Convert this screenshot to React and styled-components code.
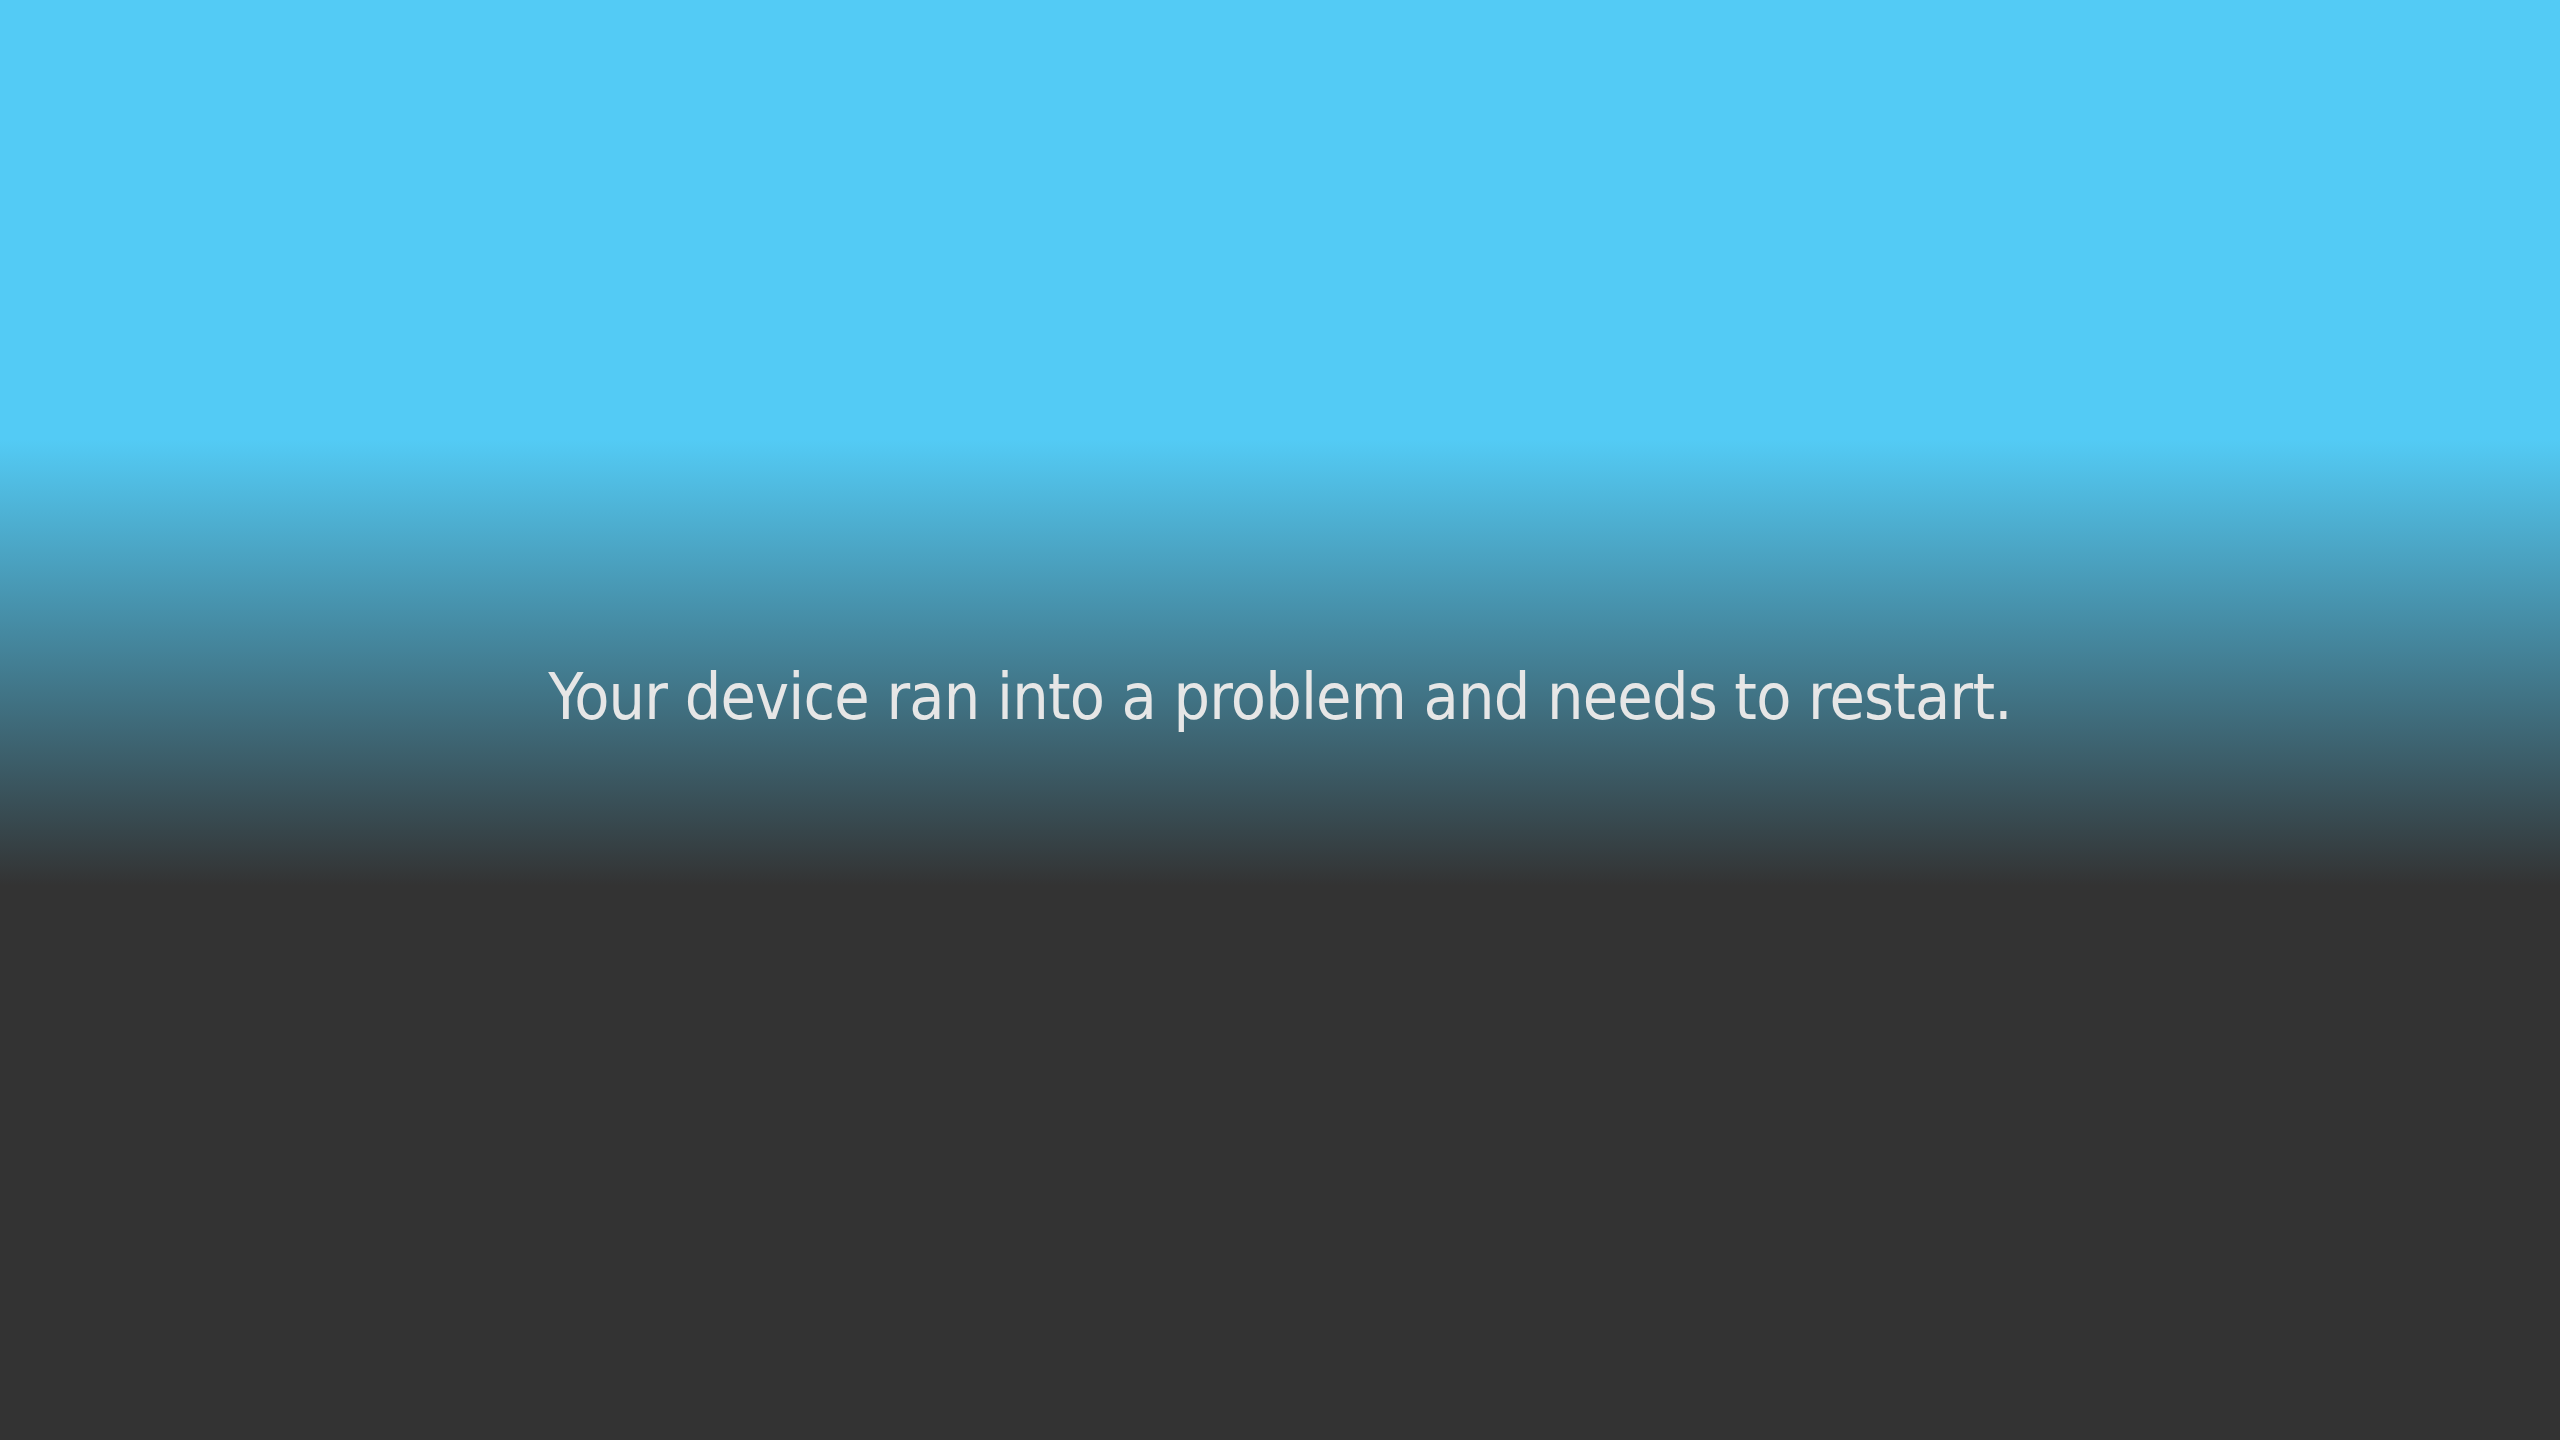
import React from "react";
import styled, { createGlobalStyle } from "styled-components";

const GlobalStyle = createGlobalStyle`
  html, body {
    margin: 0;
    padding: 0;
    height: 100%;
  }
  #root {
    height: 100%;
  }
`;

const Screen = styled.div`
  height: 100vh;
  display: flex;
  align-items: center;
  justify-content: center;
  background: linear-gradient(to bottom, #53cbf5 30.5%, #333333 61.5%);
  overflow: hidden;
`;

const Message = styled.h1`
  margin: 0 0 ${(p) => p.lift}px 0;
  font-family: "DejaVu Sans Condensed", "DejaVu Sans", sans-serif;
  font-weight: normal;
  font-size: 64px;
  letter-spacing: -0.8px;
  line-height: 1;
  color: #e6e6e6;
  white-space: nowrap;
`;

const App = () => {
  return (
    <>
      <GlobalStyle />
      <Screen>
        <Message lift={46}>Your device ran into a problem and needs to restart.</Message>
      </Screen>
    </>
  );
};

export default App;
